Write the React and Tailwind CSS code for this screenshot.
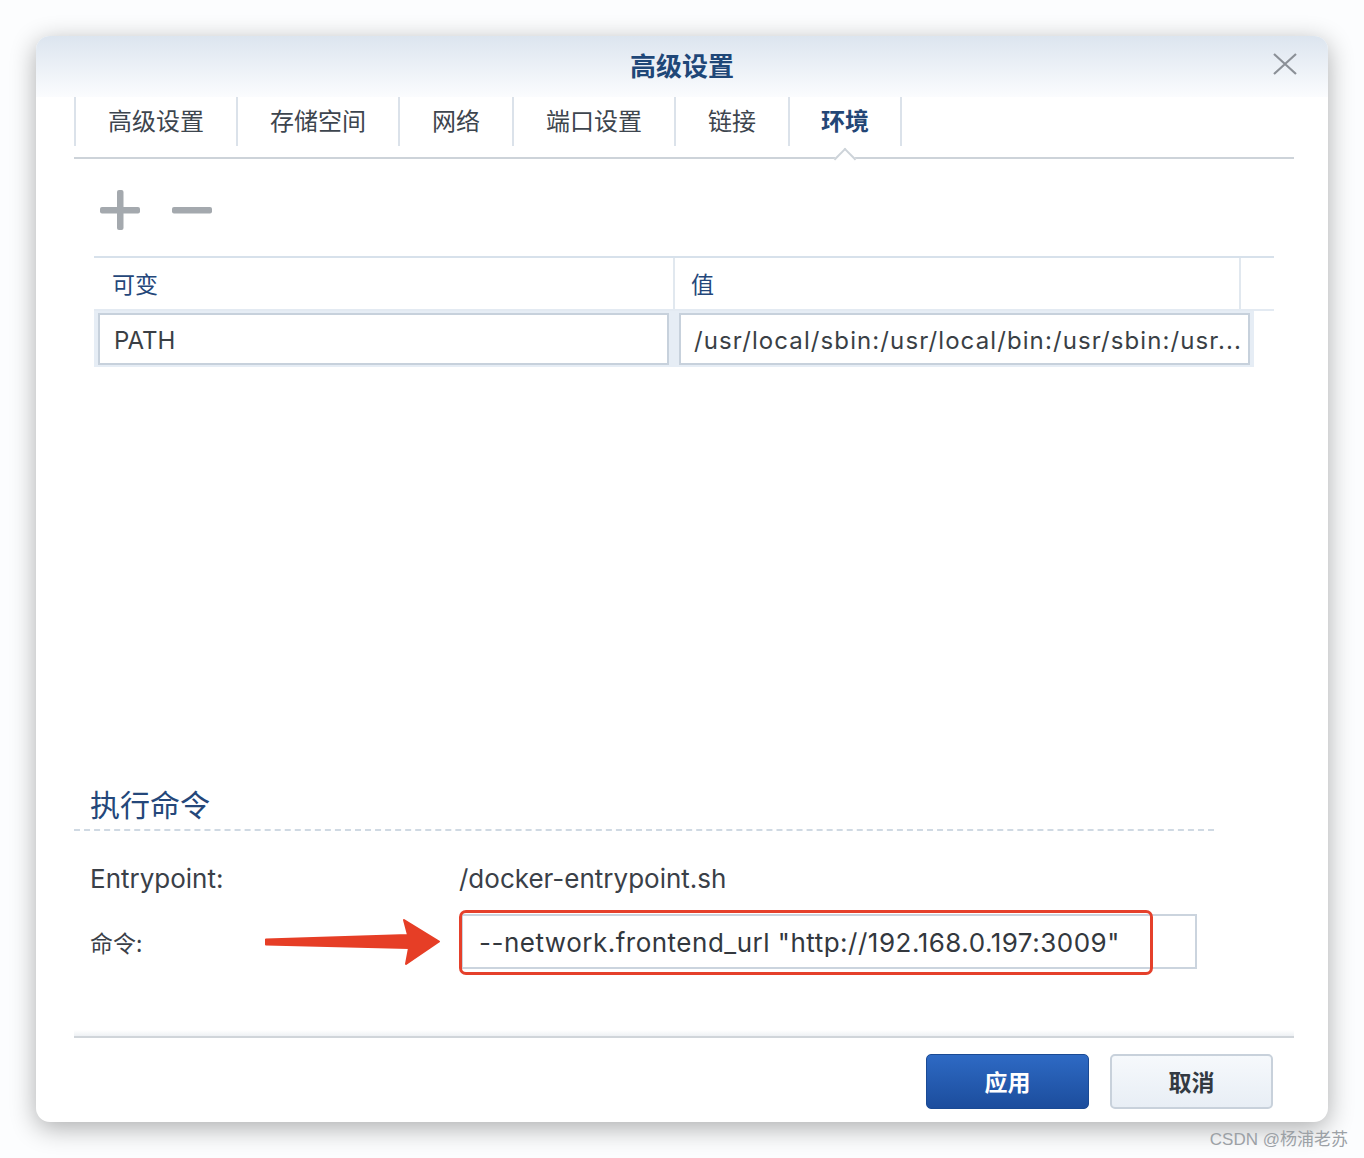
import React from "react";

const FONT = { fontFamily: '"Inter", "Noto Sans CJK SC", sans-serif' };
const CJK = { fontFamily: '"Noto Sans CJK SC", sans-serif' };

function Tab({ label, w, active, last }) {
  return (
    <div
      className={`relative h-[49px] pb-[3px] flex items-center justify-center border-l-2 border-[#dbe2ea] ${last ? "border-r-2" : ""} ${
        active ? "font-bold text-[#234676]" : "text-[#3d454e]"
      } text-[24px]`}
      style={{ width: w, ...CJK }}
    >
      {label}
    </div>
  );
}

export default function App() {
  const tabs = [
    { label: "高级设置", w: 162 },
    { label: "存储空间", w: 162 },
    { label: "网络", w: 114 },
    { label: "端口设置", w: 162 },
    { label: "链接", w: 114 },
    { label: "环境", w: 114, active: true },
  ];
  return (
    <div className="relative w-[1364px] h-[1158px] bg-[#fcfdfe] overflow-hidden pt-[36px] pl-[36px]" style={FONT}>
      {/* dialog */}
      <div className="relative w-[1292px] h-[1086px] rounded-[14px] bg-white shadow-[0_6px_26px_rgba(0,0,0,0.32)] overflow-hidden flex flex-col">
        {/* title bar */}
        <div className="relative h-[61px] shrink-0 bg-gradient-to-b from-[#dce5ef] to-[#fbfcfe] flex justify-center pt-[10px]">
          <div className="text-[26px] leading-[38px] font-bold text-[#1f4778]" style={CJK}>高级设置</div>
          <svg className="absolute left-[1236px] top-[17px]" width="26" height="22" viewBox="0 0 26 22">
            <path d="M2 1 L24 21 M24 1 L2 21" stroke="#8b9097" strokeWidth="2.2" fill="none" />
          </svg>
        </div>

        {/* tabs */}
        <div className="px-[38px] pr-[34px] shrink-0">
          <div className="relative h-[62px]">
            <div className="flex">
              {tabs.map((t, i) => (
                <Tab key={t.label} {...t} last={i === tabs.length - 1} />
              ))}
            </div>
            <div className="absolute left-0 right-0 bottom-0 h-[2px] bg-[#cdd3d9]" />
            <div className="absolute left-[763px] bottom-[-8px] w-[16px] h-[16px] rotate-45 bg-white border-l-2 border-t-2 border-[#cdd3d9]" />
          </div>
        </div>

        {/* content */}
        <div className="px-[38px] pr-[34px] flex flex-col">
          {/* plus minus */}
          <div className="mt-[31px] h-[40px] flex items-center gap-[32px] pl-[26px]">
            <svg width="40" height="40" viewBox="0 0 40 40">
              <rect x="17" y="0" width="6.5" height="40" rx="2" fill="#a4a9ae" />
              <rect x="0" y="17" width="40" height="6.5" rx="2" fill="#a4a9ae" />
            </svg>
            <svg width="40" height="40" viewBox="0 0 40 40">
              <rect x="0" y="17" width="40" height="6.5" rx="2" fill="#a4a9ae" />
            </svg>
          </div>

          {/* table */}
          <div className="mt-[26px] mx-[20px] border-t-2 border-[#d7e1eb]">
            <div className="flex h-[53px] border-b-2 border-[#e3eaf2] text-[23px] text-[#24477a]" style={CJK}>
              <div className="w-[581px] border-r-2 border-[#e1e8ef] flex items-center pl-[18px]">可变</div>
              <div className="w-[566px] border-r-2 border-[#e1e8ef] flex items-center pl-[16px]">值</div>
              <div className="flex-1" />
            </div>
            <div className="w-[1160px] h-[56px] bg-[#e6edf5] flex items-start gap-[10px] px-[4px] pt-[2px] text-[24px] text-[#3a3f45]">
              <div className="w-[571px] h-[52px] bg-white border-2 border-[#c7d1dc] flex items-center pl-[14px] pt-[3px]">PATH</div>
              <div className="w-[571px] h-[52px] bg-white border-2 border-[#c7d1dc] flex items-center pl-[13px] pt-[3px] whitespace-nowrap overflow-hidden tracking-[1.1px]">
                /usr/local/sbin:/usr/local/bin:/usr/sbin:/usr...
              </div>
            </div>
          </div>

          {/* section */}
          <div className="mt-[416px] h-[40px] flex items-center pl-[16px] text-[30px] text-[#24477a]" style={CJK}>执行命令</div>
          <div className="mt-[6px] w-[1140px] border-t-2 border-dashed border-[#cfd9e3]" />

          <div className="mt-[27px] h-[40px] flex items-center text-[26px] text-[#3a4048]">
            <div className="w-[385px] pl-[16px]">Entrypoint:</div>
            <div>/docker-entrypoint.sh</div>
          </div>

          <div className="mt-[12px] h-[66px] flex items-start">
            <div className="w-[188px] pl-[16px] h-[64px] flex items-center text-[23px] text-[#3a4048]" style={CJK}>命令:</div>
            <svg className="mt-[5px]" width="182" height="54" viewBox="0 0 182 54">
              <path
                d="M4 24.5 L146 20 L142 5 L177 26.5 L144 49 L147 33 L4 29.5 Z"
                fill="#e63e26"
                stroke="#e63e26"
                strokeWidth="2"
                strokeLinejoin="round"
              />
            </svg>
            <div className="relative ml-[15px] h-[66px]">
              <div className="ml-[2px] mt-[4px] w-[736px] h-[55px] border-2 border-[#cbd4de] bg-white flex items-center pl-[16px] pt-[2px] text-[26px] tracking-[0.5px] text-[#33383e] whitespace-nowrap">
                --network.frontend_url "http://192.168.0.197:3009"
              </div>
              <div className="absolute left-0 top-0 w-[694px] h-[65px] border-[3px] border-[#e5402b] rounded-[7px]" />
            </div>
          </div>

          {/* footer */}
          <div className="mt-[54px] h-[6px] bg-gradient-to-b from-white to-[#eef1f4]" />
          <div className="h-[2px] bg-[#d0d5da]" />
          <div className="mt-[16px] flex justify-end gap-[21px] pr-[21px]" style={CJK}>
            <div className="w-[163px] h-[55px] rounded-[5px] bg-gradient-to-b from-[#2e6ac4] to-[#1c4d9d] border border-[#1a4a94] flex items-center justify-center text-white text-[23px] font-bold">
              应用
            </div>
            <div className="w-[163px] h-[55px] rounded-[5px] bg-gradient-to-b from-[#f6f9fc] to-[#e8eef5] border-2 border-[#c8d1db] flex items-center justify-center text-[#333a42] text-[23px] font-bold">
              取消
            </div>
          </div>
        </div>
      </div>

      <div className="absolute right-[16px] top-[1128px] text-[17px] leading-[24px] text-[#9ca1a6]" style={{ fontFamily: '"Liberation Sans", "Noto Sans CJK SC", sans-serif' }}>
        CSDN @杨浦老苏
      </div>
    </div>
  );
}
